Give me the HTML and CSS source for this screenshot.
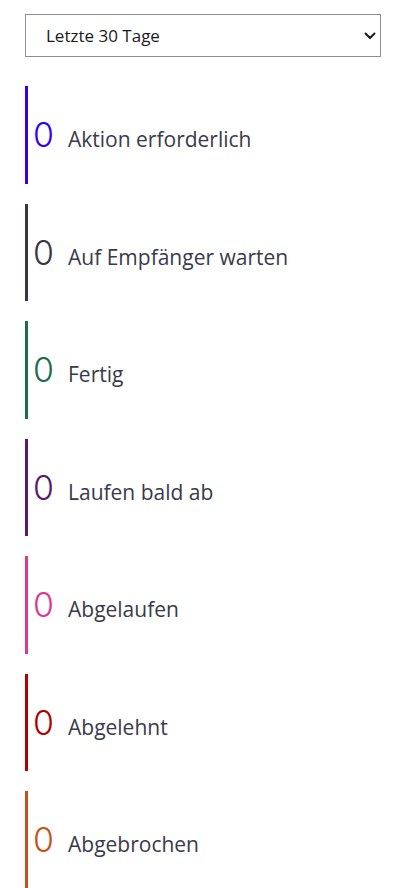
FILE: index.html
```html
<!DOCTYPE html>
<html lang="de">
<head>
<meta charset="utf-8">
<title>Übersicht</title>
<link rel="stylesheet" href="styles.css">
</head>
<body>
<main class="page">
  <div class="select-wrap">
    <select class="period">
      <option>Letzte 30 Tage</option>
      <option>Letzte 7 Tage</option>
      <option>Letzte 90 Tage</option>
    </select>
    <svg class="chevron" width="12" height="8" viewBox="0 0 12 8" aria-hidden="true">
      <path d="M1.5 1.5 L6 6 L10.5 1.5" fill="none" stroke="#1a1a1a" stroke-width="2" stroke-linecap="round" stroke-linejoin="round"/>
    </svg>
  </div>
  <ul class="stats">
    <li class="stat blue"><div class="row"><span class="num">0</span><span class="label">Aktion erforderlich</span></div></li>
    <li class="stat dark"><div class="row"><span class="num">0</span><span class="label">Auf Empfänger warten</span></div></li>
    <li class="stat green"><div class="row"><span class="num">0</span><span class="label">Fertig</span></div></li>
    <li class="stat purple"><div class="row"><span class="num">0</span><span class="label">Laufen bald ab</span></div></li>
    <li class="stat pink"><div class="row"><span class="num">0</span><span class="label">Abgelaufen</span></div></li>
    <li class="stat red"><div class="row"><span class="num">0</span><span class="label">Abgelehnt</span></div></li>
    <li class="stat orange"><div class="row"><span class="num">0</span><span class="label">Abgebrochen</span></div></li>
  </ul>
</main>
</body>
</html>
```

FILE: styles.css
```css
html, body {
  margin: 0;
  padding: 0;
  background: #ffffff;
}
body {
  font-family: "Open Sans", "Noto Sans", sans-serif;
  color: #3a3a4a;
}
.page {
  padding: 14px 21px 0 25px;
  display: flex;
  flex-direction: column;
  gap: 29px;
}
.select-wrap {
  position: relative;
  height: 43px;
}
.period {
  appearance: none;
  -webkit-appearance: none;
  width: 100%;
  height: 43px;
  box-sizing: border-box;
  border: 1px solid #8d8d94;
  border-radius: 0;
  background: #ffffff;
  font-family: "Open Sans", "Noto Sans", sans-serif;
  font-size: 17px;
  color: #1a1a1a;
  padding: 0 40px 0 20px;
  margin: 0;
}
.chevron {
  position: absolute;
  right: 5px;
  top: 18px;
}
.stats {
  list-style: none;
  margin: 0;
  padding: 0;
  display: flex;
  flex-direction: column;
  gap: 20px;
}
.stat {
  height: 97.5px;
  border-left: 3px solid #3a3a4a;
  display: flex;
  align-items: center;
  padding-left: 5px;
  box-sizing: border-box;
  padding-top: 1px;
}
.row {
  display: flex;
  align-items: baseline;
}
.num {
  font-family: Inter, "Open Sans", sans-serif;
  font-size: 34px;
  font-weight: 300;
  line-height: 1;
  width: 35px;
}
.label {
  font-size: 21px;
  line-height: 1;
  color: #3a3a4a;
}
.blue { border-color: #3300ee; }
.blue .num { color: #3300ee; }
.dark { border-color: #373646; }
.dark .num { color: #373646; }
.green { border-color: #1e6b4c; }
.green .num { color: #1e6b4c; }
.purple { border-color: #5a1866; }
.purple .num { color: #5a1866; }
.pink { border-color: #db3b87; }
.pink .num { color: #db3b87; }
.red { border-color: #b00000; }
.red .num { color: #b00000; }
.orange { border-color: #c4521a; }
.orange .num { color: #c4521a; }
```
